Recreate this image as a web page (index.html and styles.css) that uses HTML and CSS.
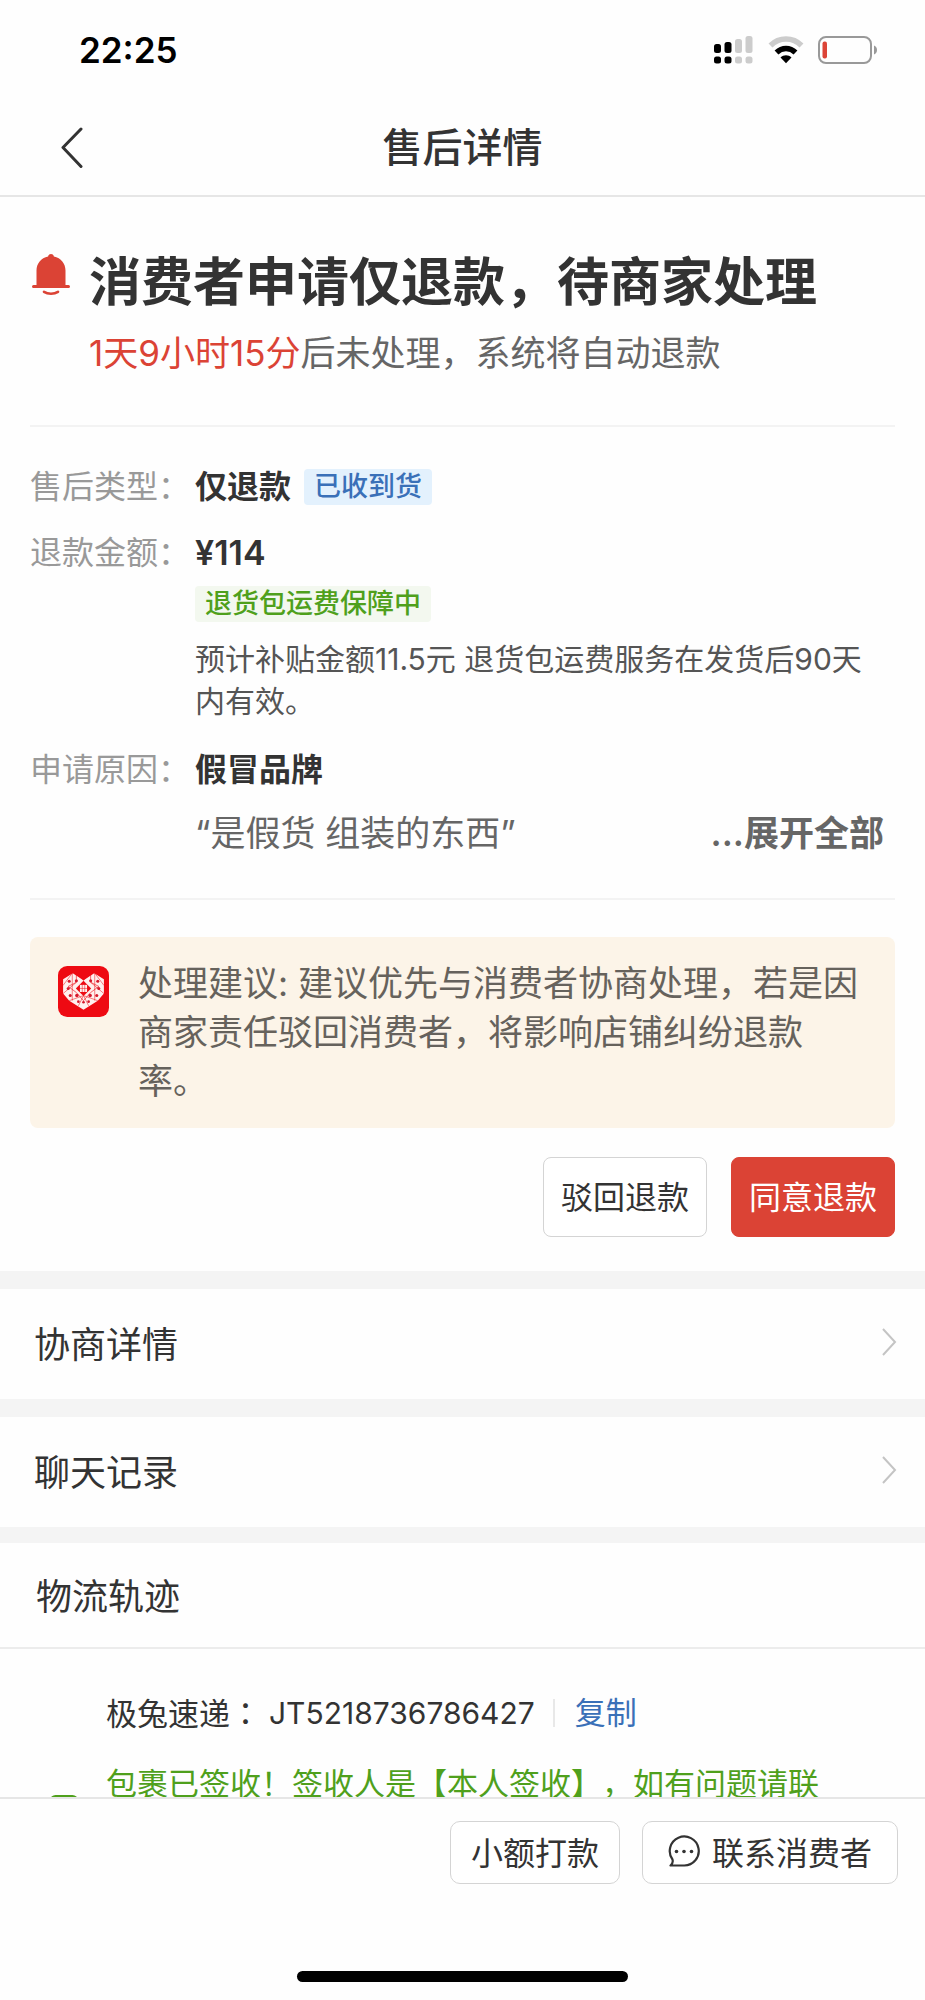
FILE: index.html
```html
<!DOCTYPE html>
<html lang="zh-CN">
<head>
<meta charset="utf-8">
<meta name="viewport" content="width=device-width, initial-scale=1">
<title>售后详情</title>
<link rel="stylesheet" href="styles.css">
</head>
<body>
<div class="app">
  <div class="status-bar">
    <span class="time">22:25</span>
    <div class="status-icons">
      <svg width="40" height="28" viewBox="0 0 40 28" aria-hidden="true">
        <g fill="#000"><rect x="0" y="8" width="7" height="9" rx="2.5"/><rect x="10.500" y="6" width="7" height="11" rx="2.500"/><rect x="0" y="20.500" width="7" height="7" rx="2.500"/><rect x="10.500" y="20.500" width="7" height="7" rx="2.500"/></g>
        <g fill="#ccc"><rect x="21" y="3" width="7" height="14" rx="2.500"/><rect x="31.500" y="0" width="7" height="17" rx="2.500"/><rect x="21" y="20.500" width="7" height="7" rx="2.500"/><rect x="31.500" y="20.500" width="7" height="7" rx="2.500"/></g>
      </svg>
      <svg width="36" height="28" viewBox="0 0 36 28" aria-hidden="true">
        <path d="M2.500 9.500C11 .800 25 .800 33.500 9.500" fill="none" stroke="#ccc" stroke-width="5.500"/>
        <path d="M8.500 16.500C14 11.200 22 11.200 27.500 16.500" fill="none" stroke="#000" stroke-width="5.500"/>
        <path d="M12.500 21.500C15.500 18.500 20.500 18.500 23.500 21.500L18 27.300Z" fill="#000"/>
      </svg>
      <svg width="60" height="28" viewBox="0 0 60 28" aria-hidden="true">
        <rect x="1" y="1" width="52" height="26" rx="7" fill="none" stroke="#999" stroke-width="2"/>
        <rect x="4.500" y="5.500" width="4.500" height="17" rx="2" fill="#dc4437"/>
        <path d="M56 9.500C60 11 60 17 56 18.500Z" fill="#999"/>
      </svg>
    </div>
  </div>

  <header class="nav">
    <button class="back" type="button" aria-label="返回">
      <svg width="24" height="42" viewBox="0 0 24 42" aria-hidden="true"><path d="M21 2 3 20.500 21 39.500" fill="none" stroke="#333" stroke-width="3" stroke-linecap="round" stroke-linejoin="round"/></svg>
    </button>
    <h1 class="nav-title">售后详情</h1>
  </header>

  <main class="content">
    <section class="case">
      <div class="case-head">
        <svg class="bell" width="38" height="42" viewBox="0 0 38 42" aria-hidden="true">
          <path d="M19 0c1.600 0 2.700 1 2.900 2.500C29 4 33.500 9.500 33.500 16.500V31H36.500Q38 31 38 32.500T36.500 34H1.500Q0 34 0 32.500T1.500 31H4.500V16.500C4.500 9.500 9 4 16.100 2.500 16.300 1 17.400 0 19 0Z" fill="#db4335"/>
          <path d="M12 37.800C16 40.300 22 40.300 26 37.800" fill="none" stroke="#db4335" stroke-width="2.600" stroke-linecap="round"/>
        </svg>
        <div>
          <h2 class="case-title">消费者申请仅退款，待商家处理</h2>
          <p class="case-sub"><span class="red">1天9小时15分</span>后未处理，系统将自动退款</p>
        </div>
      </div>

      <dl class="facts">
        <div class="fact">
          <dt>售后类型：</dt>
          <dd><div class="value">仅退款<span class="tag tag-blue">已收到货</span></div></dd>
        </div>
        <div class="fact">
          <dt>退款金额：</dt>
          <dd>
            <div class="value amount">¥114</div>
            <span class="tag tag-green">退货包运费保障中</span>
            <p class="note">预计补贴金额11.5元 退货包运费服务在发货后90天内有效。</p>
          </dd>
        </div>
        <div class="fact">
          <dt>申请原因：</dt>
          <dd>
            <div class="value">假冒品牌</div>
            <div class="quote"><span>“是假货 组装的东西”</span><button class="expand" type="button">...展开全部</button></div>
          </dd>
        </div>
      </dl>

      <div class="advice">
        <svg class="logo" width="51" height="51" viewBox="0 0 50 50" aria-hidden="true">
          <rect width="50" height="50" rx="9" fill="#ee0a12"/>
          <path d="M5 13 14.500 7 25 14 35.500 7 45 13V27L39 34 25 43 11 34 5 27Z" fill="#fff0ee"/>
          <path d="M25 14 18 8V16L10 20 18 26 25 34 32 26 40 20 32 16V8Z" fill="none" stroke="#ee0a12" stroke-width=".6"/>
          <path d="M25 14.500 32.500 22 25 29.500 17.500 22Z" fill="#ee0a12"/>
          <path d="M21.500 18.500H28.500V25.500H21.500Z" fill="#fff0ee"/>
          <path d="M23.800 18V26M26.200 18V26M21 22H29M5 19 14 7V34M45 19 36 7V34M5 27 18 16M45 27 32 16M11 34 25 29 39 34M20 39 25 29 30 39" fill="none" stroke="#ee0a12" stroke-width=".5"/>
          <g fill="#d6182b"><circle cx="11" cy="15" r="1.500"/><circle cx="18" cy="14.500" r="1.500"/><circle cx="32" cy="14.500" r="1.500"/><circle cx="39" cy="15" r="1.500"/><circle cx="10" cy="22" r="1.500"/><circle cx="40" cy="22" r="1.500"/><circle cx="12" cy="29" r="1.500"/><circle cx="18.500" cy="29" r="1.700"/><circle cx="31.500" cy="29" r="1.700"/><circle cx="38" cy="29" r="1.500"/><circle cx="20" cy="35" r="1.300"/><circle cx="25" cy="35.500" r="1.300"/><circle cx="30" cy="35" r="1.300"/></g>
        </svg>
        <p class="advice-text">处理建议: 建议优先与消费者协商处理，若是因商家责任驳回消费者，将影响店铺纠纷退款率。</p>
      </div>

      <div class="actions">
        <button class="btn" type="button">驳回退款</button>
        <button class="btn btn-primary" type="button">同意退款</button>
      </div>
    </section>

    <a class="link-row" href="#negotiation">协商详情
      <svg width="16" height="30" viewBox="0 0 16 30" aria-hidden="true"><path d="M2 2 14 15 2 28" fill="none" stroke="#c4c4c4" stroke-width="2"/></svg>
    </a>
    <a class="link-row" href="#chat">聊天记录
      <svg width="16" height="30" viewBox="0 0 16 30" aria-hidden="true"><path d="M2 2 14 15 2 28" fill="none" stroke="#c4c4c4" stroke-width="2"/></svg>
    </a>

    <section class="track">
      <h3 class="track-title">物流轨迹</h3>
      <div class="track-body">
        <div class="carrier">
          <span>极兔速递<span class="mid-colon" lang="zh-TW">：</span></span>
          <span class="waybill">JT5218736786427</span>
          <button class="copy" type="button">复制</button>
        </div>
        <div class="event">
          <svg class="event-icon" width="28" height="28" viewBox="0 0 28 28" aria-hidden="true"><rect x="1.500" y="1.500" width="25" height="25" rx="4" fill="none" stroke="#4fa01c" stroke-width="3"/><path d="M8 14 12.500 18.500 20 10" fill="none" stroke="#4fa01c" stroke-width="3"/></svg>
          <p class="event-text">包裹已签收！签收人是【本人签收】，如有问题请联</p>
        </div>
      </div>
    </section>
  </main>

  <footer class="bottom">
    <div class="bottom-actions">
      <button class="pill" type="button">小额打款</button>
      <button class="pill pill-wide" type="button">
        <svg width="32" height="32" viewBox="0 0 32 32" aria-hidden="true"><path d="M2.500 30.500H16A14.500 14.500 0 1 0 4.500 24.500Q5.500 28 2.500 30.500Z" fill="none" stroke="#333" stroke-width="2.200" stroke-linejoin="round"/><g fill="#333"><circle cx="8.500" cy="16.500" r="1.800"/><circle cx="16" cy="16.500" r="1.800"/><circle cx="23.500" cy="16.500" r="1.800"/></g></svg>
        联系消费者
      </button>
    </div>
    <div class="home-indicator"></div>
  </footer>
</div>
</body>
</html>
```

FILE: styles.css
```css
* { box-sizing: border-box; }

body, h1, h2, h3, p, dl, dd { margin: 0; }

body {
  background: #fefefe;
  color: #333;
  font-family: Inter, "Noto Sans CJK SC", sans-serif;
  text-spacing-trim: space-all;
}

button {
  margin: 0;
  padding: 0;
  border: 0;
  background: none;
  color: inherit;
  font: inherit;
  white-space: nowrap;
  cursor: pointer;
}

svg { flex: none; display: block; }

.app {
  display: flex;
  flex-direction: column;
  height: 100vh;
}

/* Status bar and navigation */
.status-bar {
  flex: none;
  display: flex;
  align-items: center;
  justify-content: space-between;
  height: 100px;
  padding: 0 47px 0 79px;
}

.time {
  color: #000;
  font-size: 35px;
  font-weight: 600;
}

.status-icons {
  display: flex;
  align-items: center;
  gap: 14px;
}

.nav {
  flex: none;
  display: grid;
  grid-template-columns: 64px 1fr 64px;
  align-items: center;
  height: 97px;
  padding: 0 60px;
  border-bottom: 2px solid #e6e6e6;
}

.nav-title {
  font-size: 40px;
  font-weight: 500;
  line-height: 60px;
  text-align: center;
}

.content {
  flex: 1;
  min-height: 0;
  overflow: hidden;
}

/* Case summary */
.case { padding: 54px 30px 34px; }

.case-head {
  display: flex;
  gap: 19px;
  padding: 0 0 47px 2px;
  border-bottom: 2px solid #f3f3f3;
}

.bell { margin-top: 3px; }

.case-title {
  font-size: 52px;
  font-weight: 700;
  line-height: 64px;
}

.case-sub {
  margin-top: 13px;
  color: #666;
  font-size: 35px;
  line-height: 50px;
}

.red { color: #db4335; }

.facts {
  display: flex;
  flex-direction: column;
  gap: 30px;
  padding: 42px 0 40px;
  border-bottom: 2px solid #f3f3f3;
}

.fact {
  display: flex;
  font-size: 32px;
  line-height: 36px;
}

.fact dt {
  flex: none;
  width: 165px;
  color: #999;
  white-space: nowrap;
}

.fact dd { flex: 1; }

.value {
  display: flex;
  align-items: center;
  gap: 13px;
  font-weight: 600;
}

.amount {
  font-size: 34px;
}

.tag {
  display: inline-block;
  padding: 0 10px;
  border-radius: 4px;
  font-size: 27px;
  font-weight: 500;
  line-height: 36px;
}

.tag-blue {
  background: #e3f1fd;
  color: #3a70b8;
}

.tag-green {
  display: table;
  margin-top: 15px;
  background: #f3f8ef;
  color: #4fa01c;
}

.note {
  margin-top: 16px;
  padding-right: 24px;
  color: #555;
  font-size: 30px;
  line-height: 42px;
}

.quote {
  display: flex;
  justify-content: space-between;
  margin-top: 20px;
  padding-right: 11px;
  color: #666;
  font-size: 35px;
  line-height: 50px;
}

.expand { font-weight: 600; }

.advice {
  display: flex;
  gap: 29px;
  margin-top: 37px;
  padding: 22px 32px 22px 28px;
  border-radius: 8px;
  background: #fcf4e8;
}

.logo { margin-top: 7px; }

.advice-text {
  color: #66625c;
  font-size: 35px;
  line-height: 49px;
}

.actions {
  display: flex;
  justify-content: flex-end;
  gap: 24px;
  margin-top: 29px;
}

.btn {
  height: 80px;
  padding: 0 17px 4px;
  border: 1px solid #d4d4d4;
  border-radius: 8px;
  background: #fff;
  font-size: 32px;
}

.btn-primary {
  border-color: #db4335;
  background: #db4335;
  color: #fff;
}

/* Linked sections */
.link-row {
  display: flex;
  align-items: center;
  justify-content: space-between;
  height: 128px;
  padding: 0 28px 4px 34px;
  border-top: 18px solid #f4f4f4;
  color: #333;
  font-size: 36px;
  text-decoration: none;
}

.track { border-top: 16px solid #f4f4f4; }

.track-title {
  padding: 5px 36px 0;
  border-bottom: 2px solid #ececec;
  font-size: 36px;
  font-weight: 400;
  line-height: 99px;
}

.track-body {
  padding: 39px 50px 0;
  font-size: 31px;
  line-height: 48px;
}

.carrier {
  display: flex;
  align-items: center;
  padding-left: 56px;
}

.mid-colon { font-family: "Noto Sans CJK TC", sans-serif; }

.waybill {
  margin-left: 8px;
  font-size: 30px;
}

.copy {
  margin-left: 18px;
  padding-left: 20px;
  border-left: 2px solid #e8e8e8;
  color: #3a70b8;
  line-height: 28px;
}

.event {
  display: flex;
  gap: 28px;
  margin-top: 31px;
  color: #4fa01c;
  line-height: 30px;
}

.event-icon { margin-top: 26px; }

.event-text { white-space: nowrap; }

/* Bottom bar */
.bottom {
  flex: none;
  padding: 22px 27px 18px;
  border-top: 2px solid #e6e6e6;
}

.bottom-actions {
  display: flex;
  justify-content: flex-end;
  gap: 22px;
}

.pill {
  display: flex;
  align-items: center;
  gap: 12px;
  height: 63px;
  padding: 0 20px 4px;
  border: 1px solid #d4d4d4;
  border-radius: 10px;
  background: #fff;
  font-size: 32px;
}

.pill-wide { padding: 0 25px 4px; }

.home-indicator {
  width: 38%;
  height: 11px;
  margin: 87px auto 0;
  border-radius: 6px;
  background: #000;
}
```
